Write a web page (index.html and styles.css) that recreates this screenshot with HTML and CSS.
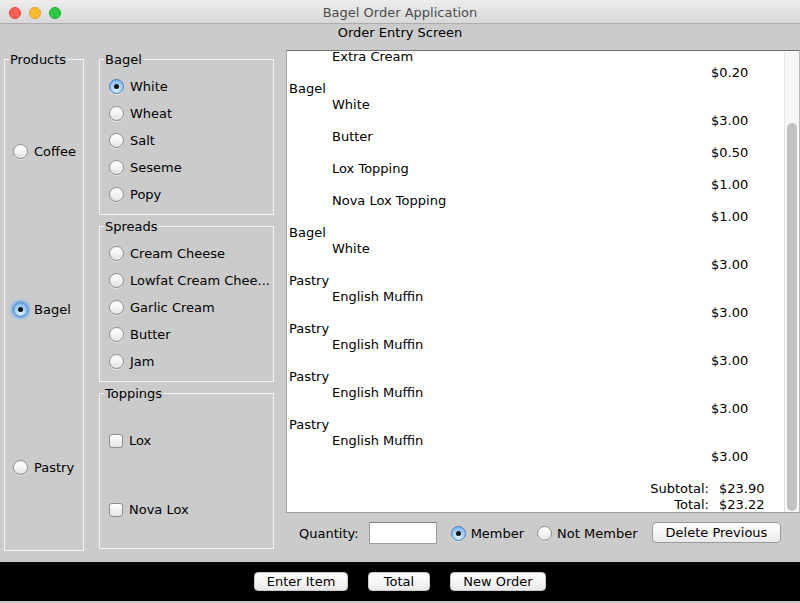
FILE: index.html
```html
<!DOCTYPE html>
<html>
<head>
<meta charset="utf-8">
<title>Bagel Order Application</title>
<link rel="stylesheet" href="styles.css">
</head>
<body>
<div class="window">
  <div class="titlebar">
    <div class="lights">
      <span class="light red"></span>
      <span class="light yellow"></span>
      <span class="light green"></span>
    </div>
    <div class="title">Bagel Order Application</div>
    <div></div>
  </div>
  <div class="header">Order Entry Screen</div>
  <div class="main">
    <fieldset class="group products">
      <legend>Products</legend>
      <label class="opt"><span class="radio"></span>Coffee</label>
      <label class="opt"><span class="radio on focus"></span>Bagel</label>
      <label class="opt"><span class="radio"></span>Pastry</label>
    </fieldset>
    <div class="options">
      <fieldset class="group sub">
        <legend>Bagel</legend>
        <label class="opt"><span class="radio on"></span>White</label>
        <label class="opt"><span class="radio"></span>Wheat</label>
        <label class="opt"><span class="radio"></span>Salt</label>
        <label class="opt"><span class="radio"></span>Seseme</label>
        <label class="opt"><span class="radio"></span>Popy</label>
      </fieldset>
      <fieldset class="group sub">
        <legend>Spreads</legend>
        <label class="opt"><span class="radio"></span>Cream Cheese</label>
        <label class="opt"><span class="radio"></span>Lowfat Cream Chee...</label>
        <label class="opt"><span class="radio"></span>Garlic Cream</label>
        <label class="opt"><span class="radio"></span>Butter</label>
        <label class="opt"><span class="radio"></span>Jam</label>
      </fieldset>
      <fieldset class="group sub toppings">
        <legend>Toppings</legend>
        <label class="opt"><span class="check"></span>Lox</label>
        <label class="opt"><span class="check"></span>Nova Lox</label>
      </fieldset>
    </div>
    <div class="order">
      <div class="receipt">
        <div class="lines">
          <div class="line item">Extra Cream</div>
          <div class="line price">$0.20</div>
          <div class="line">Bagel</div>
          <div class="line item">White</div>
          <div class="line price">$3.00</div>
          <div class="line item">Butter</div>
          <div class="line price">$0.50</div>
          <div class="line item">Lox Topping</div>
          <div class="line price">$1.00</div>
          <div class="line item">Nova Lox Topping</div>
          <div class="line price">$1.00</div>
          <div class="line">Bagel</div>
          <div class="line item">White</div>
          <div class="line price">$3.00</div>
          <div class="line">Pastry</div>
          <div class="line item">English Muffin</div>
          <div class="line price">$3.00</div>
          <div class="line">Pastry</div>
          <div class="line item">English Muffin</div>
          <div class="line price">$3.00</div>
          <div class="line">Pastry</div>
          <div class="line item">English Muffin</div>
          <div class="line price">$3.00</div>
          <div class="line">Pastry</div>
          <div class="line item">English Muffin</div>
          <div class="line price">$3.00</div>
          <div class="line"></div>
          <div class="line total"><span class="total-label">Subtotal:</span><span>$23.90</span></div>
          <div class="line total"><span class="total-label">Total:</span><span>$23.22</span></div>
        </div>
        <div class="scrollbar"><div class="thumb"></div></div>
      </div>
      <div class="controls">
        <span class="qty-label">Quantity:</span>
        <span class="field"></span>
        <label class="opt inline member"><span class="radio on"></span>Member</label>
        <label class="opt inline"><span class="radio"></span>Not Member</label>
        <button class="btn btn-delete">Delete Previous</button>
      </div>
    </div>
  </div>
  <div class="footer">
    <button class="btn btn-enter">Enter Item</button>
    <button class="btn btn-total">Total</button>
    <button class="btn btn-new">New Order</button>
  </div>
</div>
</body>
</html>
```
FILE: styles.css
```css
* { box-sizing: border-box; }
html, body { margin: 0; padding: 0; }
body {
  font-family: "DejaVu Sans", "Liberation Sans", sans-serif;
  font-size: 13px;
  color: #000;
  background: #cbcbcb;
}
.window {
  width: 800px;
  height: 603px;
  background: #cbcbcb;
  overflow: hidden;
}
.titlebar {
  height: 24px;
  display: grid;
  grid-template-columns: 1fr auto 1fr;
  align-items: center;
  background: linear-gradient(#ececec, #d8d8d8);
  border-bottom: 1px solid #adadad;
}
.lights {
  display: flex;
  gap: 8px;
  padding-left: 9px;
  padding-top: 2px;
}
.light {
  width: 12px;
  height: 12px;
  border-radius: 50%;
}
.red { background: #fc5f58; border: 1px solid #e0463f; }
.yellow { background: #fdbb2f; border: 1px solid #dfa024; }
.green { background: #2fc845; border: 1px solid #1faa34; }
.title {
  color: #4d4d4d;
  font-size: 13px;
  padding-top: 2px;
}
.header {
  height: 18px;
  line-height: 18px;
  text-align: center;
}
.main {
  height: 520px;
  display: flex;
  align-items: flex-start;
  padding: 8px 0 0 4px;
}
.group {
  margin: 0;
  border: 1px solid #f3f3f3;
  min-width: 0;
  display: flex;
  flex-direction: column;
}
.group legend {
  margin-left: 4px;
  padding: 0 1px;
  line-height: 15px;
  font-size: 13px;
}
.products {
  width: 80px;
  height: 499px;
  margin-top: 2px;
  margin-right: 15px;
  padding: 5px 0 4px 0;
}
.products .opt { padding-left: 8px; }
.options {
  width: 175px;
  flex: none;
  margin-top: 2px;
  margin-right: 12px;
}
.sub {
  width: 175px;
  height: 163px;
  padding: 6px 0 6px 0;
}
.sub + .sub { margin-top: 4px; }
.sub .opt { padding-left: 9px; }
.toppings { padding: 5px 0 4px 0; }
.opt {
  flex: 1;
  display: flex;
  align-items: center;
  gap: 6px;
  white-space: nowrap;
}
.radio {
  width: 15px;
  height: 15px;
  flex: none;
  border-radius: 50%;
  border: 1px solid #8d8d8d;
  background: linear-gradient(#ffffff, #f4f4f4 50%, #e2e2e2);
  box-shadow: 0 1px 0 rgba(255,255,255,0.5);
  display: flex;
  align-items: center;
  justify-content: center;
}
.radio.on {
  border-color: #4c7dbd;
  background: radial-gradient(circle at 50% 75%, #e2f3ff 0%, #a4d2fa 45%, #6aa9e8 100%);
}
.radio.on::after {
  content: "";
  width: 5px;
  height: 5px;
  border-radius: 50%;
  background: #111;
}
.radio.focus {
  box-shadow: 0 0 0 2px rgba(125, 176, 238, 0.75), 0 0 2px 3px rgba(150, 195, 245, 0.5);
}
.check {
  width: 14px;
  height: 14px;
  flex: none;
  border-radius: 3px;
  border: 1px solid #8f8f8f;
  background: linear-gradient(#ffffff, #f2f2f2 50%, #e4e4e4);
}
.order {
  width: 514px;
  flex: none;
}
.receipt {
  height: 463px;
  display: flex;
  background: #fff;
  border-top: 1px solid #707070;
  border-left: 1px solid #a4a4a4;
  border-bottom: 1px solid #a0a0a0;
  border-right: 1px solid #b8b8b8;
}
.lines {
  flex: 1;
  overflow: hidden;
  padding-left: 2px;
}
.line {
  height: 16px;
  line-height: 16px;
  white-space: nowrap;
}
.line:first-child { margin-top: -2px; }
.item { padding-left: 43px; }
.price { padding-left: 422px; }
.total {
  display: grid;
  grid-template-columns: 420px auto;
  column-gap: 10px;
}
.total-label { text-align: right; }
.scrollbar {
  width: 15px;
  flex: none;
  background: #f7f7f7;
  border-left: 1px solid #e3e3e3;
  padding: 72px 2px 1px 2px;
}
.thumb {
  height: 100%;
  border-radius: 5px;
  background: #c2c2c2;
}
.controls {
  margin-top: 9px;
  height: 22px;
  display: flex;
  align-items: center;
  padding: 0 19px 0 13px;
}
.qty-label { margin-right: 10px; }
.field {
  width: 68px;
  height: 22px;
  background: #fff;
  border: 1px solid #9c9c9c;
  border-top-color: #808080;
  margin-right: 14px;
}
.opt.inline { flex: none; gap: 5px; }
.member { margin-right: 13px; }
.btn {
  font-family: "DejaVu Sans", "Liberation Sans", sans-serif;
  font-size: 13px;
  color: #000;
  padding: 0;
  border: 1px solid #9a9a9a;
  border-radius: 4px;
  background: linear-gradient(#ffffff, #f6f6f6 50%, #e9e9e9);
  line-height: 1;
}
.btn-delete {
  margin-left: auto;
  width: 129px;
  height: 21px;
  align-self: flex-start;
}
.footer {
  height: 39px;
  background: #000;
  display: flex;
  align-items: center;
  justify-content: center;
  gap: 20px;
}
.footer .btn { height: 19px; border-color: #c8c8c8; }
.btn-enter { width: 94px; }
.btn-total { width: 62px; }
.btn-new { width: 96px; }
```
